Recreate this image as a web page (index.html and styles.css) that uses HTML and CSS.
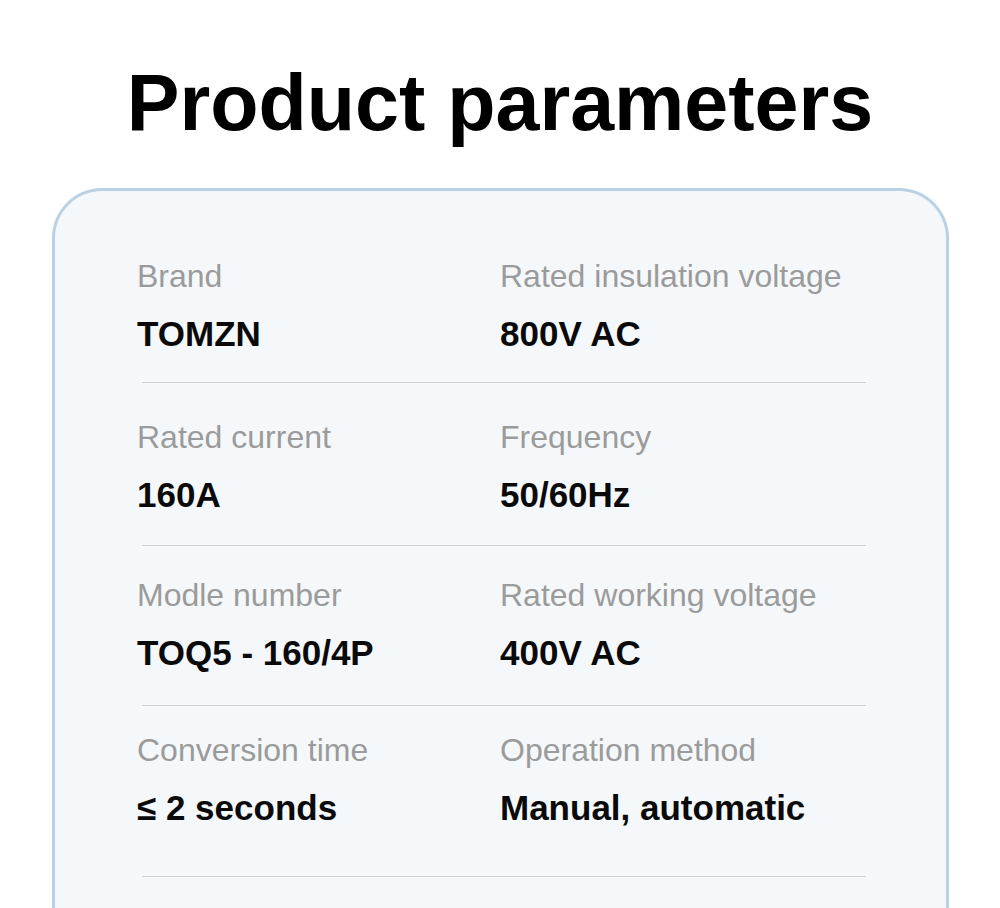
FILE: index.html
```html
<!DOCTYPE html>
<html lang="en">
<head>
<meta charset="utf-8">
<title>Product parameters</title>
<link rel="stylesheet" href="styles.css">
</head>
<body>
<h1 class="title">Product parameters</h1>
<main class="card">
  <section class="row row-1">
    <div class="cell"><div class="label">Brand</div><div class="value">TOMZN</div></div>
    <div class="cell"><div class="label">Rated insulation voltage</div><div class="value">800V AC</div></div>
  </section>
  <div class="divider"></div>
  <section class="row row-2">
    <div class="cell"><div class="label">Rated current</div><div class="value">160A</div></div>
    <div class="cell"><div class="label">Frequency</div><div class="value">50/60Hz</div></div>
  </section>
  <div class="divider"></div>
  <section class="row row-3">
    <div class="cell"><div class="label">Modle number</div><div class="value">TOQ5 - 160/4P</div></div>
    <div class="cell"><div class="label">Rated working voltage</div><div class="value">400V AC</div></div>
  </section>
  <div class="divider"></div>
  <section class="row row-4">
    <div class="cell"><div class="label">Conversion time</div><div class="value">≤ 2 seconds</div></div>
    <div class="cell"><div class="label">Operation method</div><div class="value">Manual, automatic</div></div>
  </section>
  <div class="divider"></div>
</main>
</body>
</html>
```

FILE: styles.css
```css
html, body {
  margin: 0;
  padding: 0;
  height: 908px;
  overflow: hidden;
  background: #ffffff;
  font-family: "Liberation Sans", Arial, Helvetica, sans-serif;
}

.title {
  margin: 58px 0 0;
  font-size: 79px;
  line-height: 90px;
  font-weight: 700;
  text-align: center;
  color: #000000;
}

.card {
  margin: 40px 51px 0 52px;
  height: 760px;
  padding-top: 67px;
  background: #f5f8fa;
  border: 3px solid #b9d1e3;
  border-bottom: none;
  border-radius: 50px 50px 0 0;
}

.row {
  display: grid;
  grid-template-columns: 363px 1fr;
  padding: 0 0 28px 82px;
}

.row-2 { padding-top: 36px; padding-bottom: 30px; }
.row-3 { padding-top: 31px; padding-bottom: 32px; }
.row-4 { padding-top: 26px; padding-bottom: 48px; }

.label {
  font-size: 32px;
  line-height: 36px;
  color: #9b9b9b;
}

.value {
  margin-top: 20px;
  font-size: 35px;
  line-height: 40px;
  font-weight: 700;
  color: #0a0a0a;
}

.divider {
  height: 1px;
  margin: 0 80px 0 87px;
  background: #cdd2d7;
}
```
